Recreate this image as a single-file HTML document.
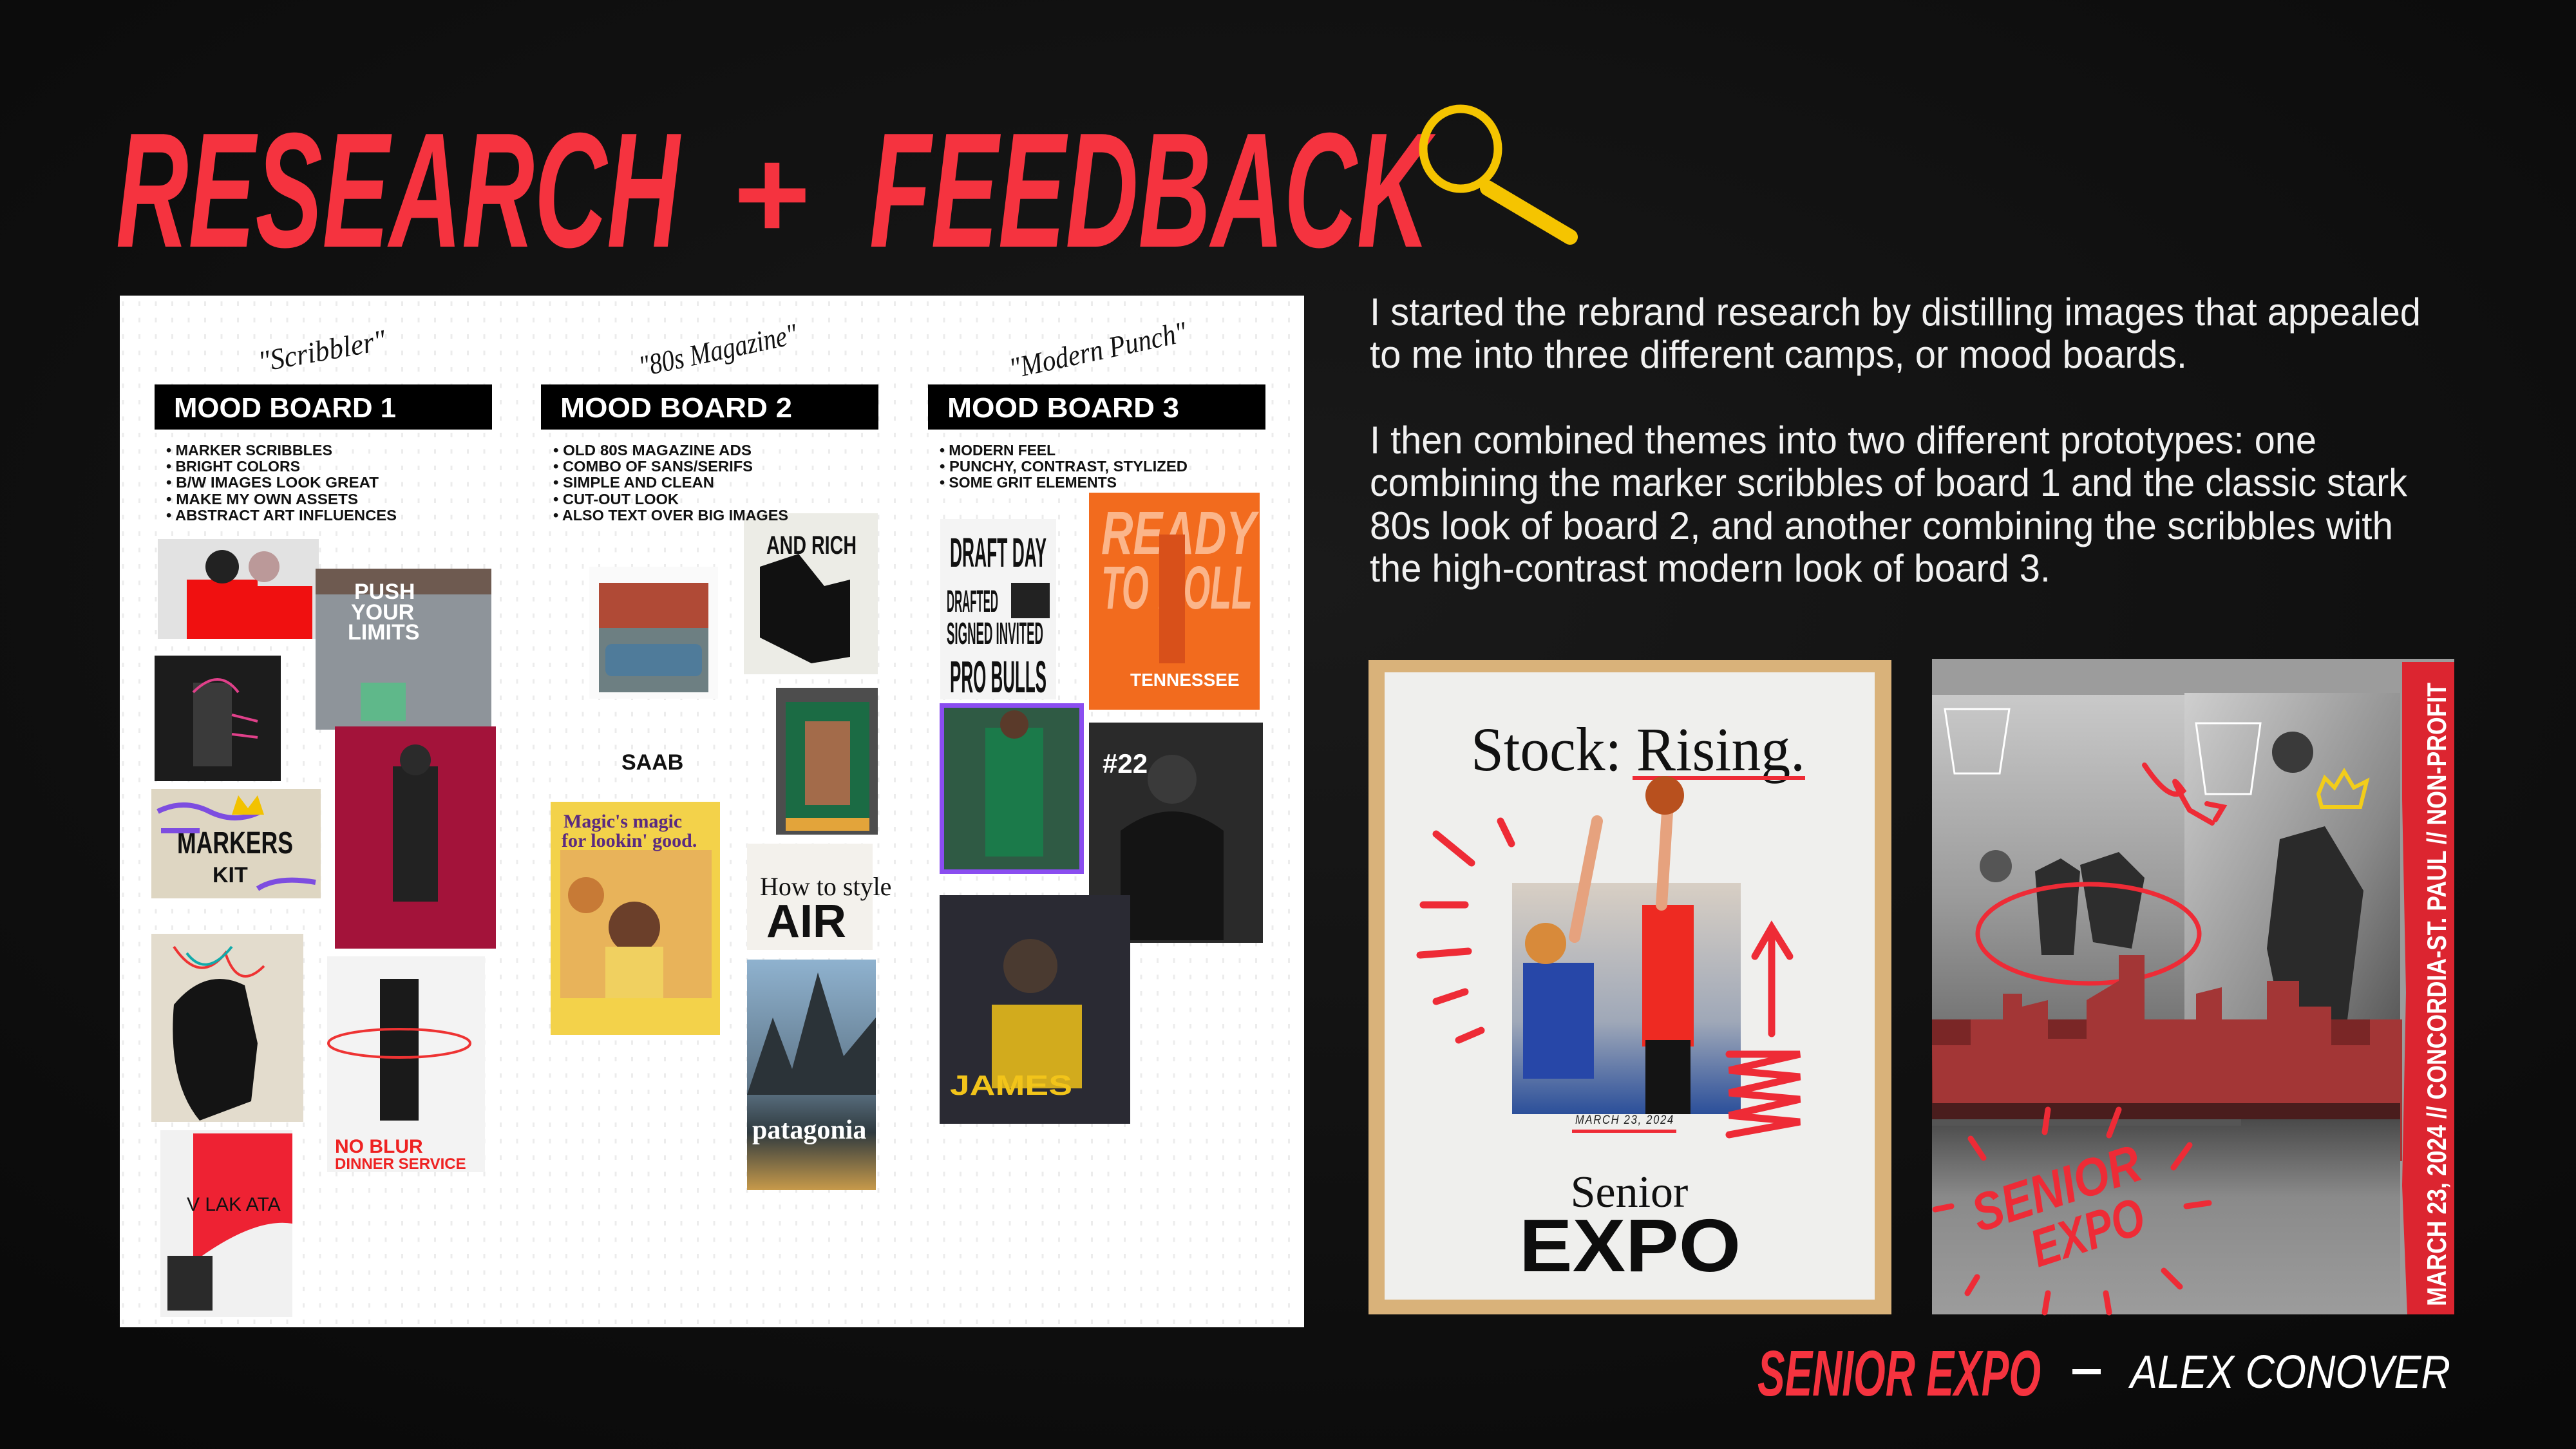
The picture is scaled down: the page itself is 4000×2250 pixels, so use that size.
<!DOCTYPE html>
<html><head><meta charset="utf-8"><style>
html,body{margin:0;padding:0;background:#0f0f0f;}
svg{display:block}
</style></head><body>
<svg width="4000" height="2250" viewBox="0 0 4000 2250" xmlns="http://www.w3.org/2000/svg" font-family="Liberation Sans, sans-serif">
<defs>
<pattern id="dots" width="25.5" height="25.5" patternUnits="userSpaceOnUse"><rect x="11" y="9" width="3" height="7" fill="#ececec"/></pattern>
<radialGradient id="bg" cx="50%" cy="40%" r="75%"><stop offset="0" stop-color="#1a1a1a"/><stop offset="1" stop-color="#090909"/></radialGradient>
<linearGradient id="gym" x1="0" y1="0" x2="0" y2="1"><stop offset="0" stop-color="#c9c9c9"/><stop offset="0.5" stop-color="#9a9a9a"/><stop offset="1" stop-color="#5c5c5c"/></linearGradient>
<linearGradient id="gym2" x1="0" y1="0" x2="1" y2="1"><stop offset="0" stop-color="#cfcfcf"/><stop offset="0.6" stop-color="#8a8a8a"/><stop offset="1" stop-color="#4a4a4a"/></linearGradient>
<linearGradient id="water" x1="0" y1="0" x2="0" y2="1"><stop offset="0" stop-color="#4a4a4a"/><stop offset="0.4" stop-color="#8a8a8a"/><stop offset="1" stop-color="#9c9c9c"/></linearGradient>
<linearGradient id="mtn" x1="0" y1="0" x2="0" y2="1"><stop offset="0" stop-color="#8fb2cf"/><stop offset="0.55" stop-color="#5f7688"/><stop offset="0.75" stop-color="#2f3a3f"/><stop offset="1" stop-color="#c79a4a"/></linearGradient>
<linearGradient id="photoL" x1="0" y1="0" x2="0" y2="1"><stop offset="0" stop-color="#d8cfc4"/><stop offset="0.6" stop-color="#9fa8b8"/><stop offset="1" stop-color="#2b4f9a"/></linearGradient>
</defs>
<rect width="4000" height="2250" fill="url(#bg)"/>

<!-- TITLE -->
<g font-weight="bold" font-style="italic" fill="#f5333f" font-size="254">
<text x="180" y="383" textLength="875" lengthAdjust="spacingAndGlyphs">RESEARCH</text>
<text x="1135" y="370" textLength="120" lengthAdjust="spacingAndGlyphs" font-size="200">+</text>
<text x="1350" y="383" textLength="870" lengthAdjust="spacingAndGlyphs">FEEDBACK</text>
</g>
<ellipse cx="2268" cy="231" rx="58" ry="62" fill="none" stroke="#f5c400" stroke-width="13"/>
<line x1="2310" y1="292" x2="2438" y2="368" stroke="#f5c400" stroke-width="24" stroke-linecap="round"/>

<!-- BOARD -->
<rect x="186" y="459" width="1839" height="1602" fill="#fff"/>
<rect x="186" y="459" width="1839" height="1602" fill="url(#dots)"/>
<g font-family="Liberation Serif, serif" font-style="italic" font-size="46" fill="#111">
<text x="400" y="560" transform="rotate(-10 500 545)" textLength="200" lengthAdjust="spacingAndGlyphs">"Scribbler"</text>
<text x="990" y="560" transform="rotate(-12 1110 545)" textLength="250" lengthAdjust="spacingAndGlyphs">"80s Magazine"</text>
<text x="1565" y="560" transform="rotate(-12 1700 545)" textLength="280" lengthAdjust="spacingAndGlyphs">"Modern Punch"</text>
</g>
<g fill="#000"><rect x="240" y="597" width="524" height="70"/><rect x="840" y="597" width="524" height="70"/><rect x="1441" y="597" width="524" height="70"/></g>
<g fill="#fff" font-weight="bold" font-size="44">
<text x="270" y="648" textLength="345" lengthAdjust="spacingAndGlyphs">MOOD BOARD 1</text>
<text x="870" y="648" textLength="360" lengthAdjust="spacingAndGlyphs">MOOD BOARD 2</text>
<text x="1471" y="648" textLength="360" lengthAdjust="spacingAndGlyphs">MOOD BOARD 3</text>
</g>

<!-- Board 1 images -->
<rect x="245" y="837" width="250" height="155" fill="#e2e2e2"/>
<rect x="290" y="900" width="110" height="92" fill="#f01010"/><rect x="385" y="910" width="100" height="82" fill="#f01010"/>
<circle cx="345" cy="880" r="26" fill="#222"/><circle cx="410" cy="880" r="24" fill="#b99"/>
<rect x="490" y="883" width="273" height="250" fill="#8e949a"/>
<rect x="490" y="883" width="273" height="40" fill="#6e5a50"/>
<text x="550" y="930" font-weight="bold" font-size="34" fill="#fff">PUSH</text><text x="545" y="962" font-weight="bold" font-size="34" fill="#fff">YOUR</text><text x="540" y="993" font-weight="bold" font-size="34" fill="#fff">LIMITS</text>
<rect x="560" y="1060" width="70" height="60" fill="#5fb88a"/>
<rect x="240" y="1018" width="196" height="195" fill="#1c1c1c"/>
<rect x="300" y="1060" width="60" height="130" fill="#3a3a3a"/>
<path d="M300 1075 q40 -40 70 0 M360 1110 l40 10 M360 1140 l40 5" stroke="#e0408a" stroke-width="4" fill="none"/>
<rect x="520" y="1128" width="250" height="345" fill="#a3133a"/>
<rect x="610" y="1190" width="70" height="210" fill="#222"/><circle cx="645" cy="1180" r="24" fill="#2b2b2b"/>
<rect x="235" y="1225" width="263" height="170" fill="#ded6c2"/>
<text x="275" y="1325" font-weight="bold" font-size="48" fill="#111" textLength="180" lengthAdjust="spacingAndGlyphs">MARKERS</text>
<text x="330" y="1370" font-weight="bold" font-size="34" fill="#111">KIT</text>
<path d="M245 1260 q40 -20 80 0 t80 0 M250 1290 l60 0 M400 1380 q30 -20 90 -10" stroke="#7d4de0" stroke-width="8" fill="none"/>
<path d="M360 1265 l10 -30 l15 20 l15 -20 l10 30z" fill="#f2c200"/>
<rect x="235" y="1450" width="236" height="292" fill="#e3dccd"/>
<path d="M270 1560 q50 -60 110 -30 l20 90 l-10 90 l-80 30 q-50 -60 -40 -180z" fill="#141414"/>
<path d="M270 1470 q40 60 80 10 q20 60 60 20" stroke="#e33" stroke-width="4" fill="none"/><path d="M290 1480 q30 40 70 -10" stroke="#1aa" stroke-width="4" fill="none"/>
<rect x="508" y="1485" width="245" height="335" fill="#f3f3f3"/>
<rect x="590" y="1520" width="60" height="220" fill="#1a1a1a"/>
<ellipse cx="620" cy="1620" rx="110" ry="22" fill="none" stroke="#e33" stroke-width="4"/>
<text x="520" y="1790" font-weight="bold" font-size="30" fill="#e22">NO BLUR</text><text x="520" y="1815" font-weight="bold" font-size="24" fill="#e22">DINNER SERVICE</text>
<rect x="249" y="1755" width="205" height="290" fill="#f1f1f1"/>
<path d="M300 1760 l154 0 l0 140 q-60 -10 -154 60z" fill="#ee2233"/>
<rect x="260" y="1950" width="70" height="85" fill="#2a2a2a"/>
<text x="290" y="1880" font-size="30" fill="#111">V  LAK ATA</text>

<!-- Board 2 images -->
<rect x="915" y="880" width="200" height="205" fill="#fafafa"/>
<rect x="930" y="905" width="170" height="170" fill="#6d7f82"/>
<rect x="930" y="905" width="170" height="70" fill="#b04a36"/>
<rect x="940" y="1000" width="150" height="50" rx="10" fill="#4f7b9a"/>
<rect x="1155" y="797" width="208" height="250" fill="#ecece6"/>
<path d="M1180 880 l60 -20 l40 50 l40 -10 l0 120 l-60 10 l-80 -40z" fill="#111"/>
<text x="1190" y="860" font-weight="bold" font-size="40" fill="#111" textLength="140" lengthAdjust="spacingAndGlyphs">AND RICH</text>
<rect x="1205" y="1068" width="158" height="228" fill="#4d4d4d"/>
<rect x="1220" y="1090" width="130" height="180" fill="#1b6b44"/>
<rect x="1250" y="1120" width="70" height="130" fill="#a36b4a"/>
<rect x="1220" y="1270" width="130" height="20" fill="#e3a43a"/>
<rect x="1160" y="1310" width="195" height="165" fill="#f3f1ec"/>
<text x="1180" y="1390" font-family="Liberation Serif, serif" font-size="40" fill="#111">How to style</text>
<text x="1190" y="1455" font-weight="bold" font-size="72" fill="#111">AIR</text>
<rect x="1160" y="1490" width="200" height="358" fill="url(#mtn)"/>
<path d="M1160 1700 l40 -120 l30 80 l40 -150 l40 130 l50 -60 l0 120 z" fill="#2b3338"/>
<text x="1168" y="1768" font-weight="bold" font-family="Liberation Serif, serif" font-size="42" fill="#fff">patagonia</text>
<text x="965" y="1195" font-weight="bold" font-size="34" fill="#111">SAAB</text>
<rect x="855" y="1245" width="263" height="362" fill="#f3d24a"/>
<rect x="870" y="1320" width="235" height="230" fill="#e8b35a"/>
<text x="875" y="1285" font-family="Liberation Serif, serif" font-weight="bold" font-size="30" fill="#5a2a80">Magic's magic</text>
<text x="872" y="1315" font-family="Liberation Serif, serif" font-weight="bold" font-size="30" fill="#5a2a80">for lookin' good.</text>
<circle cx="985" cy="1440" r="40" fill="#6b3f2a"/><rect x="940" y="1470" width="90" height="80" fill="#f0d060"/>
<circle cx="910" cy="1390" r="28" fill="#c77a36"/>

<!-- Board 3 images -->
<rect x="1460" y="806" width="180" height="280" fill="#f4f4f4"/>
<text x="1475" y="880" font-weight="bold" font-size="64" fill="#111" textLength="150" lengthAdjust="spacingAndGlyphs">DRAFT DAY</text>
<text x="1470" y="950" font-weight="bold" font-size="48" fill="#111" textLength="80" lengthAdjust="spacingAndGlyphs">DRAFTED</text>
<rect x="1570" y="905" width="60" height="55" fill="#222"/>
<text x="1470" y="1000" font-weight="bold" font-size="48" fill="#111" textLength="150" lengthAdjust="spacingAndGlyphs">SIGNED INVITED</text>
<text x="1475" y="1075" font-weight="bold" font-size="70" fill="#111" textLength="150" lengthAdjust="spacingAndGlyphs">PRO BULLS</text>
<rect x="1691" y="765" width="265" height="337" fill="#f26b1e"/>
<text x="1710" y="860" font-weight="bold" font-style="italic" font-size="95" fill="#fbb58a" textLength="240" lengthAdjust="spacingAndGlyphs">READY</text>
<text x="1710" y="945" font-weight="bold" font-style="italic" font-size="95" fill="#fbb58a" textLength="235" lengthAdjust="spacingAndGlyphs">TO ROLL</text>
<rect x="1800" y="830" width="40" height="200" fill="#d8501a"/>
<text x="1755" y="1065" font-weight="bold" font-size="28" fill="#fff">TENNESSEE</text>
<rect x="1459" y="1092" width="224" height="265" fill="#8a4df0"/>
<rect x="1466" y="1099" width="210" height="251" fill="#2f5a44"/>
<rect x="1530" y="1130" width="90" height="200" fill="#1b7a4a"/><circle cx="1575" cy="1125" r="22" fill="#5a3a2a"/>
<rect x="1691" y="1122" width="270" height="342" fill="#2a2a2a"/>
<path d="M1740 1290 q80 -60 160 0 l0 170 l-160 0z" fill="#141414"/><circle cx="1820" cy="1210" r="38" fill="#3a3a3a"/>
<text x="1712" y="1200" font-weight="bold" font-size="42" fill="#fff">#22</text>
<rect x="1459" y="1390" width="296" height="355" fill="#2a2a33"/>
<rect x="1540" y="1560" width="140" height="130" fill="#f0c21a" opacity="0.85"/>
<circle cx="1600" cy="1500" r="42" fill="#4a3a30"/>
<text x="1475" y="1700" font-weight="bold" font-size="44" fill="#f2c41a" textLength="190" lengthAdjust="spacingAndGlyphs">JAMES</text>

<!-- Bullets on top -->
<g font-weight="bold" font-size="23" fill="#111">
<text x="258" y="707" textLength="258" lengthAdjust="spacingAndGlyphs">• MARKER SCRIBBLES</text>
<text x="258" y="732" textLength="208" lengthAdjust="spacingAndGlyphs">• BRIGHT COLORS</text>
<text x="258" y="757" textLength="330" lengthAdjust="spacingAndGlyphs">• B/W IMAGES LOOK GREAT</text>
<text x="258" y="783" textLength="298" lengthAdjust="spacingAndGlyphs">• MAKE MY OWN ASSETS</text>
<text x="258" y="808" textLength="358" lengthAdjust="spacingAndGlyphs">• ABSTRACT ART INFLUENCES</text>
<text x="859" y="707" textLength="308" lengthAdjust="spacingAndGlyphs">• OLD 80S MAGAZINE ADS</text>
<text x="859" y="732" textLength="310" lengthAdjust="spacingAndGlyphs">• COMBO OF SANS/SERIFS</text>
<text x="859" y="757" textLength="250" lengthAdjust="spacingAndGlyphs">• SIMPLE AND CLEAN</text>
<text x="859" y="783" textLength="195" lengthAdjust="spacingAndGlyphs">• CUT-OUT LOOK</text>
<text x="859" y="808" textLength="365" lengthAdjust="spacingAndGlyphs">• ALSO TEXT OVER BIG IMAGES</text>
<text x="1459" y="707" textLength="180" lengthAdjust="spacingAndGlyphs">• MODERN FEEL</text>
<text x="1459" y="732" textLength="385" lengthAdjust="spacingAndGlyphs">• PUNCHY, CONTRAST, STYLIZED</text>
<text x="1459" y="757" textLength="275" lengthAdjust="spacingAndGlyphs">• SOME GRIT ELEMENTS</text>
</g>

<!-- RIGHT TEXT -->
<g fill="#f1f1f1" font-size="60">
<text x="2127" y="505" textLength="1632" lengthAdjust="spacingAndGlyphs">I started the rebrand research by distilling images that appealed</text>
<text x="2127" y="571" textLength="1269" lengthAdjust="spacingAndGlyphs">to me into three different camps, or mood boards.</text>
<text x="2127" y="704" textLength="1470" lengthAdjust="spacingAndGlyphs">I then combined themes into two different prototypes: one</text>
<text x="2127" y="770" textLength="1611" lengthAdjust="spacingAndGlyphs">combining the marker scribbles of board 1 and the classic stark</text>
<text x="2127" y="837" textLength="1589" lengthAdjust="spacingAndGlyphs">80s look of board 2, and another combining the scribbles with</text>
<text x="2127" y="903" textLength="1057" lengthAdjust="spacingAndGlyphs">the high-contrast modern look of board 3.</text>
</g>

<!-- LEFT POSTER -->
<g transform="translate(2125,1025)">
<rect width="812" height="1016" fill="#d9b27a"/>
<rect x="25" y="19" width="761" height="974" fill="#efefed"/>
<text x="159" y="171" font-family="Liberation Serif, serif" font-size="96" fill="#111" textLength="519" lengthAdjust="spacingAndGlyphs">Stock: Rising.</text>
<rect x="410" y="180" width="268" height="6" fill="#ee2b36"/>
<rect x="223" y="346" width="355" height="359" fill="url(#photoL)"/>
<rect x="240" y="470" width="110" height="180" fill="#2747a8"/>
<circle cx="275" cy="440" r="32" fill="#d88a3a"/>
<rect x="425" y="380" width="80" height="220" fill="#ee2a22"/>
<rect x="430" y="590" width="70" height="115" fill="#141414"/>
<path d="M320 430 l35 -180 M455 380 l10 -160" stroke="#e6a27e" stroke-width="18" stroke-linecap="round"/>
<circle cx="460" cy="210" r="30" fill="#b8501e"/>
<text x="321" y="720" font-style="italic" font-size="19" fill="#222" textLength="154" lengthAdjust="spacingAndGlyphs" letter-spacing="2">MARCH 23, 2024</text>
<rect x="316" y="729" width="162" height="5" fill="#ee2b36"/>
<g stroke="#ee2b36" stroke-width="11" stroke-linecap="round" fill="none">
<line x1="105" y1="270" x2="160" y2="315"/><line x1="205" y1="250" x2="222" y2="285"/>
<line x1="85" y1="380" x2="150" y2="380"/><line x1="80" y1="458" x2="155" y2="452"/>
<line x1="105" y1="530" x2="150" y2="515"/><line x1="140" y1="590" x2="175" y2="575"/>
<line x1="626" y1="580" x2="626" y2="420"/><path d="M600 460 l26 -45 l28 45"/>
<path d="M560 612 l110 0 l-110 25 l110 10 l-110 25 l110 10 l-110 25 l110 10 l-110 20"/>
</g>
<text x="405" y="849" text-anchor="middle" font-family="Liberation Serif, serif" font-size="70" fill="#111">Senior</text>
<text x="234" y="949" font-weight="bold" font-size="116" fill="#0d0d0d" textLength="344" lengthAdjust="spacingAndGlyphs">EXPO</text>
</g>

<!-- RIGHT POSTER -->
<g transform="translate(3000,1023)">
<rect width="811" height="1018" fill="#9c9c9c"/>
<rect x="0" y="56" width="392" height="640" fill="url(#gym)"/>
<rect x="392" y="53" width="335" height="643" fill="url(#gym2)"/>
<path d="M20 78 l100 0 l-15 100 l-70 0z" fill="none" stroke="#fff" stroke-width="3"/>
<path d="M410 100 l100 0 l-15 110 l-70 0z" fill="none" stroke="#fff" stroke-width="3"/>
<path d="M160 330 l40 -20 l30 20 l-10 130 l-50 0z M230 320 l60 -20 l40 40 l-20 110 l-60 -10z" fill="#2d2d2d"/>
<path d="M540 280 l70 -20 l60 100 l-30 240 l-90 0 l-30 -150z" fill="#2a2a2a"/>
<circle cx="560" cy="145" r="32" fill="#3a3a3a"/><circle cx="99" cy="322" r="25" fill="#555"/>
<ellipse cx="243" cy="427" rx="172" ry="77" fill="none" stroke="#ee2b36" stroke-width="7"/>
<path d="M330 165 q40 60 60 40 q-30 -40 10 30 l35 20 M440 250 l12 -20 l-25 -5" stroke="#ee2b36" stroke-width="8" fill="none" stroke-linecap="round"/>
<path d="M600 210 l10 -25 l15 15 l15 -25 l15 25 l20 -10 l-10 40 l-60 0z" fill="none" stroke="#f2cd1a" stroke-width="6"/>
<rect x="0" y="560" width="727" height="170" fill="#7a2626"/>
<path d="M0 600 l60 0 l0 -40 l50 0 l0 -40 l30 0 l0 20 l40 -10 l0 60 l60 0 l0 -60 l50 -30 l0 -40 l40 0 l0 100 l80 0 l0 -40 l40 -10 l0 50 l70 0 l0 -60 l50 0 l0 40 l50 0 l0 60 l60 0 l0 -40 l50 0 l0 220 l-727 0z" fill="#a33636"/>
<rect x="0" y="690" width="727" height="40" fill="#4a1d1d"/>
<rect x="0" y="715" width="727" height="303" fill="url(#water)"/>
<rect x="0" y="715" width="480" height="10" fill="#555"/>
<g stroke="#ee2b36" stroke-width="9" stroke-linecap="round">
<line x1="180" y1="700" x2="175" y2="735"/><line x1="290" y1="700" x2="275" y2="740"/>
<line x1="60" y1="745" x2="80" y2="775"/><line x1="400" y1="755" x2="375" y2="790"/>
<line x1="5" y1="855" x2="30" y2="850"/><line x1="395" y1="850" x2="430" y2="845"/>
<line x1="70" y1="960" x2="55" y2="985"/><line x1="360" y1="950" x2="385" y2="975"/>
<line x1="180" y1="985" x2="175" y2="1015"/><line x1="270" y1="985" x2="275" y2="1015"/>
</g>
<g transform="rotate(-18 200 860)" font-weight="bold" font-style="italic" fill="#ee2b36">
<text x="70" y="850" font-size="82" textLength="270" lengthAdjust="spacingAndGlyphs">SENIOR</text>
<text x="140" y="930" font-size="82" textLength="180" lengthAdjust="spacingAndGlyphs">EXPO</text>
</g>
<path d="M730 5 l81 0 l0 1013 l-73 0 l-8 -200 l6 -300 l-6 -300z" fill="#dc2530"/>
<text transform="translate(798,1005) rotate(-90)" font-weight="bold" font-size="42" fill="#fff" textLength="968" lengthAdjust="spacingAndGlyphs">MARCH 23, 2024 // CONCORDIA-ST. PAUL // NON-PROFIT</text>
</g>

<!-- CAPTION -->
<text x="2729" y="2167" font-weight="bold" font-style="italic" font-size="100" fill="#f5333f" textLength="440" lengthAdjust="spacingAndGlyphs">SENIOR EXPO</text>
<rect x="3218" y="2126" width="44" height="8" fill="#fff"/>
<text x="3308" y="2155" font-style="italic" font-size="72" fill="#fff" textLength="497" lengthAdjust="spacingAndGlyphs">ALEX CONOVER</text>
</svg>
</body></html>
